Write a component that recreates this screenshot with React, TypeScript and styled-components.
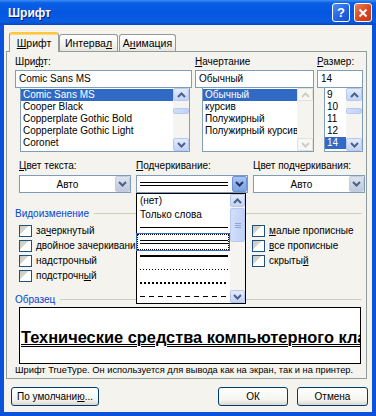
import styled, { createGlobalStyle, css } from "styled-components";

const GlobalStyle = createGlobalStyle`
  html, body { margin: 0; padding: 0; background: #fff; }
  body { font-family: "Liberation Sans", Arial, sans-serif; font-size: 10px; color: #000; }
  * { box-sizing: border-box; }
`;

type LineKind = "single" | "double" | "thick" | "dots" | "squares" | "dashes";

const Window = styled.div`
  width: 376px;
  height: 416px;
  display: flex;
  flex-direction: column;
`;

const TitleBar = styled.div`
  height: 25px;
  display: flex;
  align-items: center;
  padding: 0 4px 0 8px;
  background: linear-gradient(180deg, #3d8cf4 0%, #0a5fe4 12%, #0456e2 50%, #0a5cde 88%, #0443c4 100%);
`;

const Title = styled.div`
  flex: 1;
  color: #fff;
  font-weight: bold;
  font-size: 12px;
  text-shadow: 1px 1px 0 #0a1a83;
`;

const CaptionBtn = styled.div<{ $close?: boolean }>`
  width: 18px;
  height: 19px;
  margin-left: 4px;
  border: 1px solid #fff;
  border-radius: 3px;
  display: flex;
  align-items: center;
  justify-content: center;
  color: #fff;
  font-weight: bold;
  font-size: 13px;
  background: ${(p) =>
    p.$close
      ? "linear-gradient(135deg, #e9805f 0%, #d9471e 55%, #c23a14 100%)"
      : "linear-gradient(135deg, #4f8ef5 0%, #2264e4 55%, #1a4fc8 100%)"};
`;

const Frame = styled.div`
  flex: 1;
  display: flex;
  flex-direction: column;
  background: #f4f3ee;
  border: 4px solid #0a52dc;
  border-top: none;
  padding: 7px 0 6px;
`;

const TabRow = styled.div`
  height: 19px;
  display: flex;
  align-items: flex-end;
  margin-left: 5px;
  position: relative;
  z-index: 1;
`;

const Tab = styled.div<{ $active?: boolean; $w: number }>`
  width: ${(p) => p.$w}px;
  height: ${(p) => (p.$active ? 20 : 17)}px;
  margin-bottom: ${(p) => (p.$active ? -1 : 0)}px;
  margin-right: ${(p) => (p.$active ? 0 : 1)}px;
  border: 1px solid #919b9c;
  border-bottom: none;
  border-radius: 3px 3px 0 0;
  display: flex;
  align-items: center;
  justify-content: center;
  font-size: 10.5px;
  ${(p) =>
    p.$active
      ? css`
          background: #f4f3ee;
          border-top: 2px solid #ffc83c;
          box-shadow: inset 0 1px 0 #f7d98a;
        `
      : css`
          background: linear-gradient(180deg, #ffffff 0%, #f3f3ef 60%, #e6e5df 100%);
        `}
`;

const Panel = styled.div`
  height: 328px;
  margin: 0 5px 0 2px;
  border: 1px solid #919b9c;
  padding: 4px 2px 2px 8px;
  display: flex;
  flex-direction: column;
`;

const TopGrid = styled.div`
  display: grid;
  grid-template-columns: 177px 119px 46px;
  column-gap: 3px;
`;

const Field = styled.div`
  display: flex;
  flex-direction: column;
`;

const Label = styled.div`
  height: 12px;
  line-height: 12px;
  white-space: nowrap;
`;

const TextBox = styled.div`
  height: 18px;
  margin-top: 2px;
  border: 1px solid #7f9db9;
  background: #fff;
  padding-left: 3px;
  line-height: 16px;
`;

const ListBox = styled.div<{ $indent: number }>`
  height: 64px;
  margin-left: ${(p) => p.$indent}px;
  margin-right: ${(p) => (p.$indent > 5 ? 0 : 2)}px;
  border: 1px solid #7f9db9;
  border-top: none;
  background: #fff;
  display: flex;
`;

const Items = styled.div`
  flex: 1;
  padding-top: 1px;
  overflow: hidden;
`;

const Item = styled.div<{ $sel?: boolean }>`
  height: 12px;
  line-height: 12px;
  padding-left: 2px;
  white-space: nowrap;
  ${(p) =>
    p.$sel &&
    css`
      background: #316ac5;
      color: #fff;
    `}
`;

const Bar = styled.div`
  width: 16px;
  display: flex;
  flex-direction: column;
  background: #f5f4f0;
`;

const ScrollBtn = styled.div<{ $off?: boolean }>`
  height: 13px;
  border: 1px solid ${(p) => (p.$off ? "#e2e1da" : "#b7c9f2")};
  border-radius: 2px;
  display: flex;
  align-items: center;
  justify-content: center;
  background: ${(p) => (p.$off ? "#f7f7f3" : "linear-gradient(180deg, #e3ebfd 0%, #c2d3f7 100%)")};
`;

const Track = styled.div`
  flex: 1;
`;

const Thumb = styled.div`
  border: 1px solid #b7c9f2;
  border-radius: 2px;
  background: linear-gradient(90deg, #d2defb 0%, #c0d1f7 100%);
  display: flex;
  flex-direction: column;
  align-items: center;
  justify-content: center;
  gap: 1px;
`;

const Grip = styled.div`
  width: 6px;
  height: 1px;
  background: #8aa2d8;
`;

const ComboRow = styled.div`
  display: grid;
  grid-template-columns: 112px 112px 112px;
  column-gap: 5px;
  margin: 8px 0 0 4px;
`;

const Combo = styled.div`
  position: relative;
  height: 18px;
  margin-top: 3px;
  border: 1px solid #7f9db9;
  background: #fff;
  display: flex;
  align-items: center;
`;

const ComboValue = styled.div`
  flex: 1;
  text-align: center;
  padding-top: 1px;
`;

const ComboLines = styled.div`
  flex: 1;
  padding-left: 3px;
`;

const DropBtn = styled.div<{ $hot?: boolean }>`
  width: 15px;
  height: 16px;
  border-radius: 2px;
  display: flex;
  align-items: center;
  justify-content: center;
  border: 1px solid ${(p) => (p.$hot ? "#6d93d4" : "#c4cde0")};
  background: ${(p) =>
    p.$hot ? "linear-gradient(180deg, #a9c4f2 0%, #7aa1e3 100%)" : "linear-gradient(180deg, #dde4f0 0%, #bfc9dc 100%)"};
`;

const DropList = styled.div`
  position: absolute;
  top: 17px;
  left: -1px;
  width: 110px;
  height: 111px;
  border: 1px solid #000;
  background: #fff;
  display: flex;
  z-index: 5;
`;

const DropItems = styled.div`
  flex: 1;
  display: flex;
  flex-direction: column;
  padding-right: 1px;
`;

const DropItem = styled.div<{ $focus?: boolean }>`
  flex: 1;
  display: flex;
  align-items: center;
  padding-left: 3px;
  white-space: nowrap;
  ${(p) =>
    p.$focus &&
    css`
      border: 1px dotted #000;
      outline: 1px solid #316ac5;
      padding-left: 2px;
    `}
`;

const Stroke = styled.div<{ $kind: LineKind }>`
  width: 88px;
  ${({ $kind }) => {
    switch ($kind) {
      case "single":
        return css`height: 1px; background: #000;`;
      case "double":
        return css`height: 4px; border-top: 1px solid #000; border-bottom: 1px solid #000;`;
      case "thick":
        return css`height: 2px; background: #000;`;
      case "dots":
        return css`height: 1px; background: repeating-linear-gradient(90deg, #000 0 1px, transparent 1px 3px);`;
      case "squares":
        return css`height: 2px; background: repeating-linear-gradient(90deg, #000 0 2px, transparent 2px 4px);`;
      default:
        return css`height: 1px; background: repeating-linear-gradient(90deg, #000 0 5px, transparent 5px 9px);`;
    }
  }}
`;

const GroupHead = styled.div<{ $top: number }>`
  height: 12px;
  margin: ${(p) => p.$top}px 2px 0 0;
  display: flex;
  align-items: center;
  gap: 5px;
  color: #0046d5;
  &::after {
    content: "";
    flex: 1;
    height: 1px;
    background: #d0d0bf;
  }
`;

const CheckGrid = styled.div`
  display: grid;
  grid-template-columns: 233px 1fr;
  grid-template-rows: repeat(4, 15px);
  grid-auto-flow: column;
  margin: 4px 0 0 4px;
`;

const CheckRow = styled.div`
  display: flex;
  align-items: center;
  gap: 4px;
  white-space: nowrap;
`;

const Box = styled.div`
  width: 13px;
  height: 12px;
  border: 1px solid #1c5180;
  background: linear-gradient(135deg, #c9c8bf 0%, #d8d7cf 40%, #ffffff 41%, #ffffff 100%);
`;

const SampleBox = styled.div`
  height: 57px;
  margin: 2px 3px 0 4px;
  border: 1px solid #000;
  background: #fff;
  display: flex;
  align-items: center;
  overflow: hidden;
  padding: 4px 0 0 1px;
`;

const SampleText = styled.div`
  font-size: 16.4px;
  font-weight: bold;
  white-space: nowrap;
  text-decoration: underline double;
  text-decoration-thickness: 1px;
  text-underline-offset: 1px;
`;

const Note = styled.div`
  height: 12px;
  line-height: 12px;
  font-size: 9.3px;
  white-space: nowrap;
`;

const ButtonRow = styled.div`
  display: flex;
  margin-top: 8px;
  padding: 0 4px 0 7px;
  gap: 9px;
`;

const Button = styled.div<{ $w: number; $push?: boolean }>`
  width: ${(p) => p.$w}px;
  height: 19px;
  margin-left: ${(p) => (p.$push ? "auto" : "0")};
  border: 1px solid #003c74;
  border-radius: 3px;
  display: flex;
  align-items: center;
  justify-content: center;
  background: linear-gradient(180deg, #ffffff 0%, #f4f4f0 70%, #dcd8cc 100%);
`;

const U = styled.span`
  text-decoration: underline;
`;

const Chevron = ({ up, color = "#4d6185" }: { up?: boolean; color?: string }) => (
  <svg width="9" height="6" viewBox="0 0 9 6">
    <polyline
      points={up ? "1,5 4.5,1.5 8,5" : "1,1 4.5,4.5 8,1"}
      fill="none"
      stroke={color}
      strokeWidth="2"
    />
  </svg>
);

function ScrollBar({ off, thumbTop, thumbH }: { off?: boolean; thumbTop?: number; thumbH?: number }) {
  const arrow = off ? "#cfcec6" : "#4d6185";
  return (
    <Bar>
      <ScrollBtn $off={off}>
        <Chevron up color={arrow} />
      </ScrollBtn>
      <Track>
        {thumbH ? (
          <Thumb style={{ marginTop: thumbTop, height: thumbH }}>
            {thumbH > 20 && (
              <>
                <Grip />
                <Grip />
                <Grip />
              </>
            )}
          </Thumb>
        ) : null}
      </Track>
      <ScrollBtn $off={off}>
        <Chevron color={arrow} />
      </ScrollBtn>
    </Bar>
  );
}

const fonts = ["Comic Sans MS", "Cooper Black", "Copperplate Gothic Bold", "Copperplate Gothic Light", "Coronet"];
const styles = ["Обычный", "курсив", "Полужирный", "Полужирный курсив"];
const sizes = ["9", "10", "11", "12", "14"];
const underlines: LineKind[] = ["single", "double", "thick", "dots", "squares", "dashes"];

export default function App() {
  return (
    <Window>
      <GlobalStyle />
      <TitleBar>
        <Title>Шрифт</Title>
        <CaptionBtn>?</CaptionBtn>
        <CaptionBtn $close>
          <svg width="10" height="10" viewBox="0 0 10 10">
            <path d="M1.5 1.5 L8.5 8.5 M8.5 1.5 L1.5 8.5" stroke="#fff" strokeWidth="2" />
          </svg>
        </CaptionBtn>
      </TitleBar>
      <Frame>
        <TabRow>
          <Tab $active $w={50}>
            <span>
              <U>Ш</U>рифт
            </span>
          </Tab>
          <Tab $w={59}>
            <span>
              Интерва<U>л</U>
            </span>
          </Tab>
          <Tab $w={57}>
            <span>
              А<U>н</U>имация
            </span>
          </Tab>
        </TabRow>
        <Panel>
          <TopGrid>
            <Field>
              <Label>
                Шри<U>ф</U>т:
              </Label>
              <TextBox>Comic Sans MS</TextBox>
              <ListBox $indent={5}>
                <Items>
                  {fonts.map((f, i) => (
                    <Item key={f} $sel={i === 0}>
                      {f}
                    </Item>
                  ))}
                </Items>
                <ScrollBar thumbTop={7} thumbH={6} />
              </ListBox>
            </Field>
            <Field>
              <Label>
                <U>Н</U>ачертание
              </Label>
              <TextBox>Обычный</TextBox>
              <ListBox $indent={7}>
                <Items>
                  {styles.map((s, i) => (
                    <Item key={s} $sel={i === 0}>
                      {s}
                    </Item>
                  ))}
                </Items>
                <ScrollBar off />
              </ListBox>
            </Field>
            <Field>
              <Label>
                <U>Р</U>азмер:
              </Label>
              <TextBox>14</TextBox>
              <ListBox $indent={7}>
                <Items>
                  {sizes.map((s, i) => (
                    <Item key={s} $sel={i === 4}>
                      {s}
                    </Item>
                  ))}
                </Items>
                <ScrollBar thumbTop={7} thumbH={6} />
              </ListBox>
            </Field>
          </TopGrid>

          <ComboRow>
            <Field>
              <Label>
                <U>Ц</U>вет текста:
              </Label>
              <Combo>
                <ComboValue>Авто</ComboValue>
                <DropBtn>
                  <Chevron />
                </DropBtn>
              </Combo>
            </Field>
            <Field>
              <Label>
                <U>П</U>одчеркивание:
              </Label>
              <Combo>
                <ComboLines>
                  <Stroke $kind="double" />
                </ComboLines>
                <DropBtn $hot>
                  <Chevron color="#21365f" />
                </DropBtn>
                <DropList>
                  <DropItems>
                    <DropItem>(нет)</DropItem>
                    <DropItem>Только слова</DropItem>
                    {underlines.map((k) => (
                      <DropItem key={k} $focus={k === "double"}>
                        <Stroke $kind={k} />
                      </DropItem>
                    ))}
                  </DropItems>
                  <ScrollBar thumbTop={1} thumbH={34} />
                </DropList>
              </Combo>
            </Field>
            <Field>
              <Label>
                Цвет подч<U>е</U>ркивания:
              </Label>
              <Combo>
                <ComboValue>Авто</ComboValue>
                <DropBtn>
                  <Chevron />
                </DropBtn>
              </Combo>
            </Field>
          </ComboRow>

          <GroupHead $top={14}>Видоизменение</GroupHead>
          <CheckGrid>
            <CheckRow>
              <Box />
              <span>
                за<U>ч</U>еркнутый
              </span>
            </CheckRow>
            <CheckRow>
              <Box />
              <span>
                <U>д</U>войное зачеркивание
              </span>
            </CheckRow>
            <CheckRow>
              <Box />
              <span>
                на<U>д</U>строчный
              </span>
            </CheckRow>
            <CheckRow>
              <Box />
              <span>
                подстрочн<U>ы</U>й
              </span>
            </CheckRow>
            <CheckRow>
              <Box />
              <span>
                <U>м</U>алые прописные
              </span>
            </CheckRow>
            <CheckRow>
              <Box />
              <span>
                <U>в</U>се прописные
              </span>
            </CheckRow>
            <CheckRow>
              <Box />
              <span>
                скрыты<U>й</U>
              </span>
            </CheckRow>
          </CheckGrid>

          <GroupHead $top={10}>Образец</GroupHead>
          <SampleBox>
            <SampleText>Технические средства компьютерного класса</SampleText>
          </SampleBox>
          <Note>Шрифт TrueType. Он используется для вывода как на экран, так и на принтер.</Note>
        </Panel>
        <ButtonRow>
          <Button $w={88}>
            <span>
              По умолчани<U>ю</U>...
            </span>
          </Button>
          <Button $w={70} $push>
            ОК
          </Button>
          <Button $w={71}>Отмена</Button>
        </ButtonRow>
      </Frame>
    </Window>
  );
}
